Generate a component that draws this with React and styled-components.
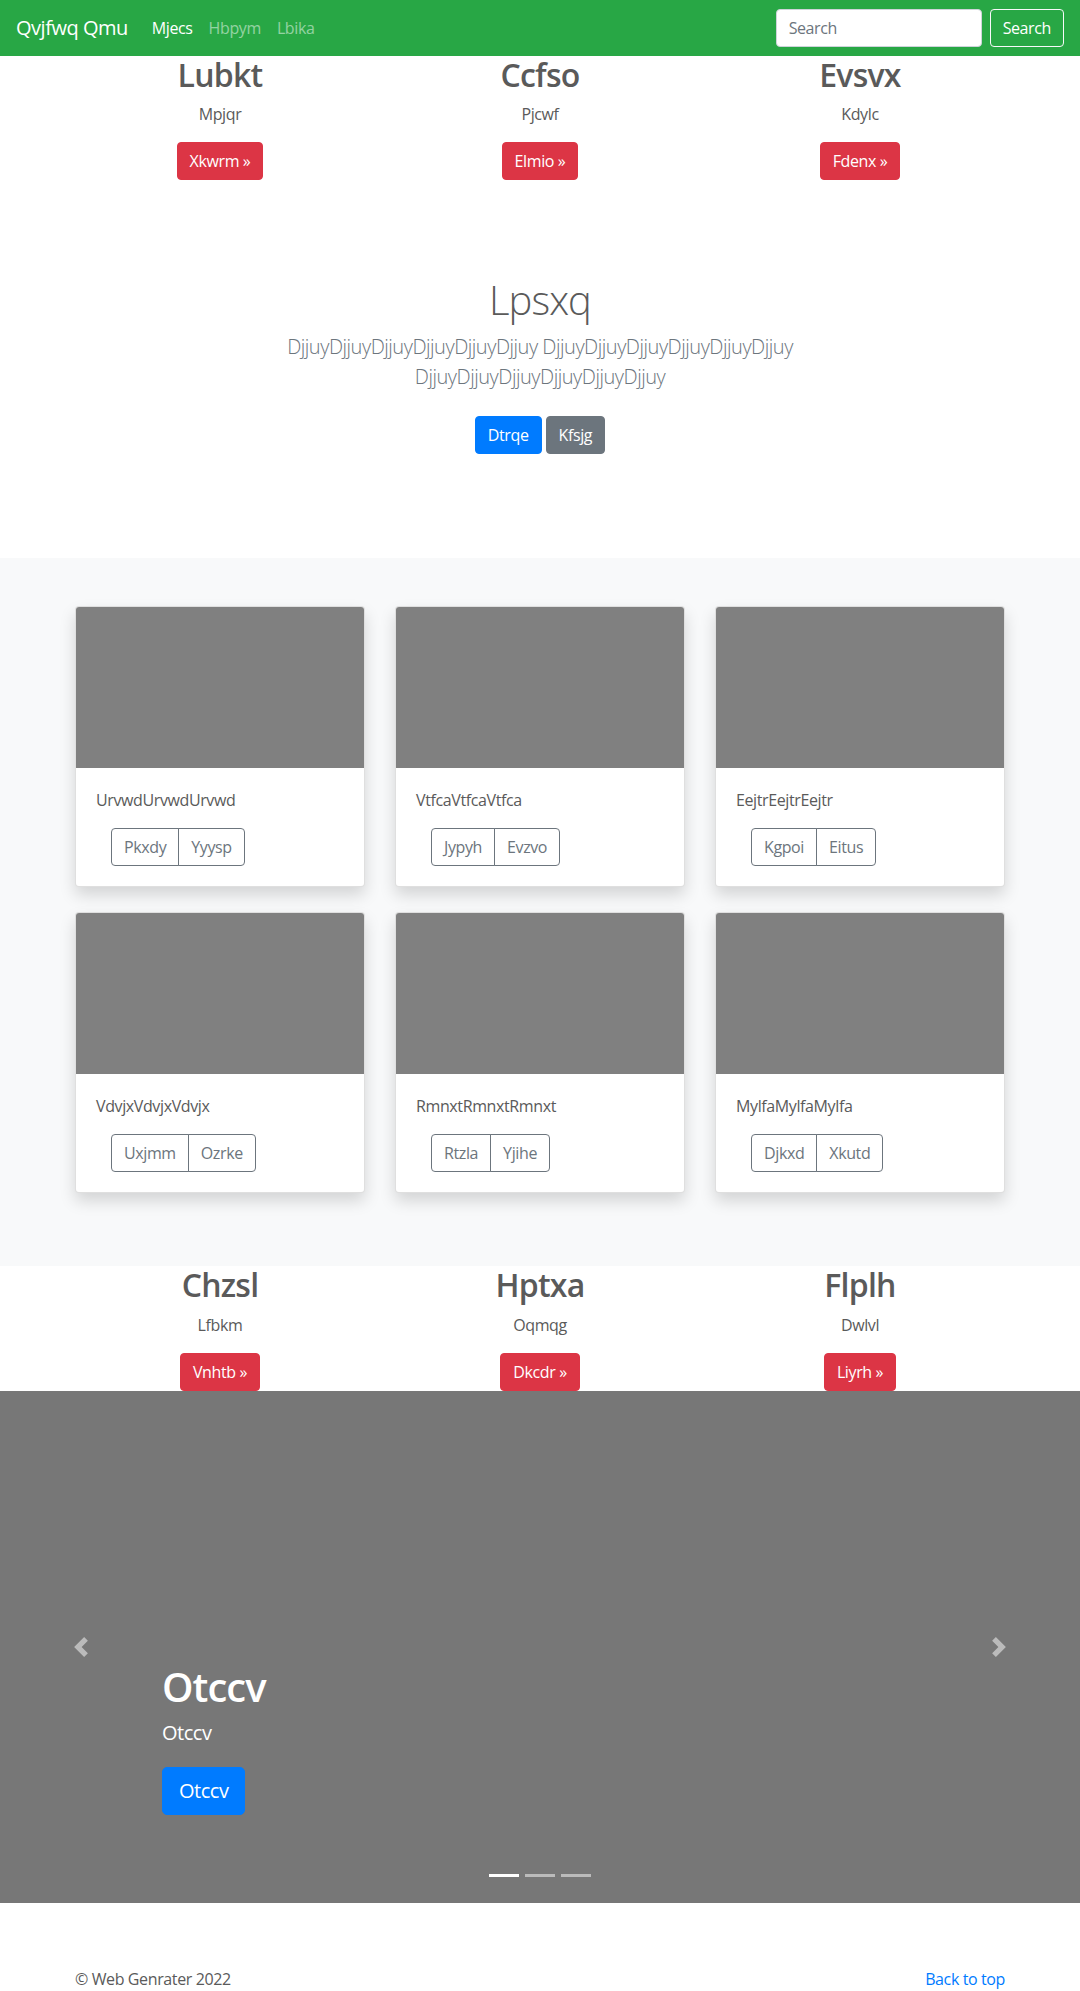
import React from "react";
import styled, { createGlobalStyle } from "styled-components";

const GlobalStyle = createGlobalStyle`
  html, body { margin: 0; padding: 0; }
  body {
    font-family: "Open Sans", "Noto Sans", sans-serif;
    font-size: 16px;
    line-height: 1.5;
    color: #5a5a5a;
    background: #fff;
  }
  *, *::before, *::after { box-sizing: border-box; letter-spacing: -0.024em; }
`;

const Navbar = styled.nav`
  display: flex;
  align-items: center;
  justify-content: space-between;
  height: 56px;
  padding: 8px 16px;
  background: #28a745;
`;

const NavLeft = styled.div`
  display: flex;
  align-items: center;
`;

const Brand = styled.a`
  font-size: 20px;
  line-height: 30px;
  padding: 5px 0;
  margin-right: 16px;
  color: #fff;
  text-decoration: none;
`;

const NavLink = styled.a`
  padding: 8px;
  color: ${(p) => (p.$active ? "#fff" : "rgba(255,255,255,0.5)")};
  text-decoration: none;
`;

const SearchForm = styled.form`
  display: flex;
  align-items: center;
`;

const SearchInput = styled.input`
  width: 206px;
  height: 38px;
  padding: 6px 12px;
  margin-right: 8px;
  font: inherit;
  color: #495057;
  border: 1px solid #ced4da;
  border-radius: 4px;
  background: #fff;
  &::placeholder { color: #6c757d; }
`;

const OutlineLightButton = styled.button`
  height: 38px;
  padding: 6px 12px;
  font: inherit;
  color: #fff;
  background: transparent;
  border: 1px solid #f8f9fa;
  border-radius: 4px;
`;

const Container = styled.div`
  max-width: 960px;
  margin: 0 auto;
  padding: 0 15px;
`;

const Row = styled.div`
  display: grid;
  grid-template-columns: repeat(3, 1fr);
  margin: 0 -15px;
`;

const FeatureCol = styled.div`
  padding: 0 15px;
  text-align: center;
`;

const FeatureTitle = styled.h2`
  margin: 0 0 8px;
  font-size: 32px;
  line-height: 1.2;
  font-weight: 600;
`;

const FeatureText = styled.p`
  margin: 0 0 16px;
`;

const Button = styled.a`
  display: inline-block;
  height: ${(p) => (p.$lg ? "48px" : "38px")};
  padding: ${(p) => (p.$lg ? "8px 16px" : "6px 12px")};
  font-size: ${(p) => (p.$lg ? "20px" : "16px")};
  line-height: 1.5;
  color: #fff;
  background: ${(p) => p.$bg};
  border: 1px solid ${(p) => p.$bg};
  border-radius: ${(p) => (p.$lg ? "5px" : "4px")};
  text-decoration: none;
  vertical-align: middle;
`;

const Jumbotron = styled.section`
  padding: 96px 0;
  text-align: center;
  background: #fff;
`;

const NarrowContainer = styled.div`
  max-width: 640px;
  margin: 0 auto;
  padding: 0 15px;
`;

const JumboTitle = styled.h1`
  margin: 0 0 8px;
  font-size: 40px;
  line-height: 1.2;
  font-weight: 300;
`;

const Lead = styled.p`
  margin: 0 0 16px;
  font-size: 20px;
  line-height: 1.5;
  font-weight: 300;
  color: #6c757d;
`;

const ActionRow = styled.div`
  display: flex;
  justify-content: center;
  gap: 4px;
  padding: 8px 0;
`;

const Album = styled.section`
  padding: 48px 0;
  background: #f8f9fa;
`;

const CardGrid = styled.div`
  display: grid;
  grid-template-columns: repeat(3, 1fr);
  column-gap: 30px;
`;

const Card = styled.div`
  margin-bottom: 25px;
  background: #fff;
  border: 1px solid rgba(0, 0, 0, 0.125);
  border-radius: 4px;
  box-shadow: 0 8px 16px rgba(0, 0, 0, 0.15);
  overflow: hidden;
`;

const CardImage = styled.div`
  height: 161px;
  background: #808080;
`;

const CardBody = styled.div`
  padding: 20px;
`;

const CardText = styled.p`
  margin: 0 0 16px;
`;

const ButtonGroup = styled.div`
  display: inline-flex;
  margin-left: 15px;
`;

const GroupButton = styled.button`
  height: 38px;
  padding: 6px 12px;
  font: inherit;
  color: #6c757d;
  background: transparent;
  border: 1px solid #6c757d;
  border-radius: 0;
  &:first-child { border-radius: 4px 0 0 4px; }
  &:last-child { border-radius: 0 4px 4px 0; margin-left: -1px; }
`;

const Carousel = styled.section`
  position: relative;
  height: 512px;
  margin-bottom: 64px;
  background: #777;
  overflow: hidden;
`;

const Caption = styled.div`
  position: absolute;
  left: 15%;
  right: 15%;
  bottom: 48px;
  padding: 20px 0;
  color: #fff;
  text-align: left;
`;

const CaptionTitle = styled.h1`
  margin: 0 0 8px;
  font-size: 40px;
  line-height: 1.2;
  font-weight: 600;
`;

const CaptionText = styled.p`
  margin: 0 0 20px;
  font-size: 20px;
  line-height: 1.4;
`;

const CaptionAction = styled.div`
  margin-bottom: 20px;
`;

const Control = styled.a`
  position: absolute;
  top: 0;
  bottom: 0;
  ${(p) => (p.$side === "prev" ? "left: 0;" : "right: 0;")}
  width: 15%;
  display: flex;
  align-items: center;
  justify-content: center;
  opacity: 0.5;
`;

const Indicators = styled.ol`
  position: absolute;
  left: 0;
  right: 0;
  bottom: 26px;
  display: flex;
  justify-content: center;
  margin: 0;
  padding: 0;
  list-style: none;
`;

const Indicator = styled.li`
  width: 30px;
  height: 3px;
  margin: 0 3px;
  background: #fff;
  opacity: ${(p) => (p.$active ? 1 : 0.5)};
`;

const Footer = styled.footer`
  display: flex;
  justify-content: space-between;
`;

const FooterText = styled.p`
  margin: 0 0 16px;
`;

const FooterLink = styled.a`
  color: #007bff;
  text-decoration: none;
`;

const Chevron = ({ dir }) => (
  <svg width="20" height="20" viewBox="0 0 8 8" fill="#fff">
    {dir === "prev" ? (
      <path d="M5.25 0l-4 4 4 4 1.5-1.5L4.25 4l2.5-2.5L5.25 0z" />
    ) : (
      <path d="M2.75 0l-1.5 1.5L3.75 4l-2.5 2.5L2.75 8l4-4-4-4z" />
    )}
  </svg>
);

const Features = ({ items }) => (
  <Container>
    <Row>
      {items.map((it) => (
        <FeatureCol key={it.title}>
          <FeatureTitle>{it.title}</FeatureTitle>
          <FeatureText>{it.text}</FeatureText>
          <Button $bg="#dc3545" href="#">
            {it.btn} »
          </Button>
        </FeatureCol>
      ))}
    </Row>
  </Container>
);

const cards = [
  { text: "UrvwdUrvwdUrvwd", a: "Pkxdy", b: "Yyysp" },
  { text: "VtfcaVtfcaVtfca", a: "Jypyh", b: "Evzvo" },
  { text: "EejtrEejtrEejtr", a: "Kgpoi", b: "Eitus" },
  { text: "VdvjxVdvjxVdvjx", a: "Uxjmm", b: "Ozrke" },
  { text: "RmnxtRmnxtRmnxt", a: "Rtzla", b: "Yjihe" },
  { text: "MylfaMylfaMylfa", a: "Djkxd", b: "Xkutd" },
];

export default function App() {
  return (
    <>
      <GlobalStyle />
      <Navbar>
        <NavLeft>
          <Brand href="#">Qvjfwq Qmu</Brand>
          <NavLink $active href="#">Mjecs</NavLink>
          <NavLink href="#">Hbpym</NavLink>
          <NavLink href="#">Lbika</NavLink>
        </NavLeft>
        <SearchForm onSubmit={(e) => e.preventDefault()}>
          <SearchInput placeholder="Search" />
          <OutlineLightButton type="submit">Search</OutlineLightButton>
        </SearchForm>
      </Navbar>

      <Features
        items={[
          { title: "Lubkt", text: "Mpjqr", btn: "Xkwrm" },
          { title: "Ccfso", text: "Pjcwf", btn: "Elmio" },
          { title: "Evsvx", text: "Kdylc", btn: "Fdenx" },
        ]}
      />

      <Jumbotron>
        <NarrowContainer>
          <JumboTitle>Lpsxq</JumboTitle>
          <Lead>
            DjjuyDjjuyDjjuyDjjuyDjjuyDjjuy DjjuyDjjuyDjjuyDjjuyDjjuyDjjuy
            DjjuyDjjuyDjjuyDjjuyDjjuyDjjuy
          </Lead>
          <ActionRow>
            <Button $bg="#007bff" href="#">Dtrqe</Button>
            <Button $bg="#6c757d" href="#">Kfsjg</Button>
          </ActionRow>
        </NarrowContainer>
      </Jumbotron>

      <Album>
        <Container>
          <CardGrid>
            {cards.map((c) => (
              <Card key={c.text}>
                <CardImage />
                <CardBody>
                  <CardText>{c.text}</CardText>
                  <ButtonGroup>
                    <GroupButton>{c.a}</GroupButton>
                    <GroupButton>{c.b}</GroupButton>
                  </ButtonGroup>
                </CardBody>
              </Card>
            ))}
          </CardGrid>
        </Container>
      </Album>

      <Features
        items={[
          { title: "Chzsl", text: "Lfbkm", btn: "Vnhtb" },
          { title: "Hptxa", text: "Oqmqg", btn: "Dkcdr" },
          { title: "Flplh", text: "Dwlvl", btn: "Liyrh" },
        ]}
      />

      <Carousel>
        <Control $side="prev" href="#">
          <Chevron dir="prev" />
        </Control>
        <Control $side="next" href="#">
          <Chevron dir="next" />
        </Control>
        <Caption>
          <CaptionTitle>Otccv</CaptionTitle>
          <CaptionText>Otccv</CaptionText>
          <CaptionAction>
            <Button $lg $bg="#007bff" href="#">Otccv</Button>
          </CaptionAction>
        </Caption>
        <Indicators>
          <Indicator $active />
          <Indicator />
          <Indicator />
        </Indicators>
      </Carousel>

      <Container>
        <Footer>
          <FooterText>© Web Genrater 2022</FooterText>
          <FooterText>
            <FooterLink href="#">Back to top</FooterLink>
          </FooterText>
        </Footer>
      </Container>
    </>
  );
}
